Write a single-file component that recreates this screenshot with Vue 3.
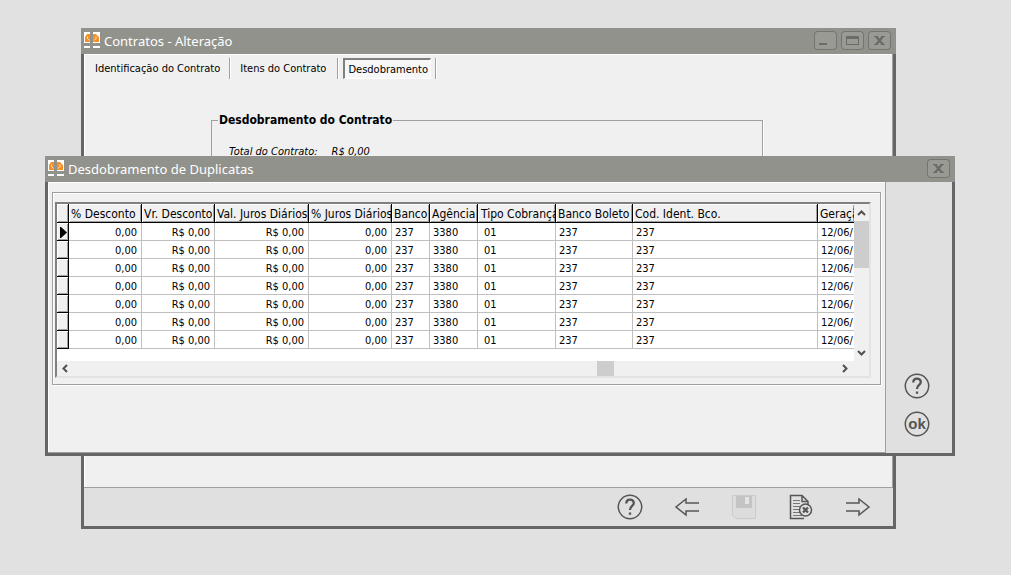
<script setup>
const columns = [
  { title: '% Desconto', value: '0,00', size: 'w73', right: true },
  { title: 'Vr. Desconto', value: 'R$ 0,00', size: 'w73', right: true },
  { title: 'Val. Juros Diários', value: 'R$ 0,00', size: 'w94', right: true },
  { title: '% Juros Diários', value: '0,00', size: 'w83', right: true },
  { title: 'Banco', value: '237', size: 'w38' },
  { title: 'Agência', value: '3380', size: 'w48' },
  { title: 'Tipo Cobrança', value: '01', size: 'w78', indent: true },
  { title: 'Banco Boleto', value: '237', size: 'w77' },
  { title: 'Cod. Ident. Bco.', value: '237', size: 'w185' },
  { title: 'Geração', value: '12/06/', size: 'w36' },
]
const rows = 7
</script>

<template>
  <main class="desktop">
    <section class="window contracts" aria-label="Contratos - Alteração">
      <header class="titlebar">
        <svg class="logo" width="16" height="16" viewBox="0 0 16 16" aria-hidden="true">
          <path fill="#fff" d="M0 0h6v11H0zM9 0h7v11H9zM0 14h6v2H0zM9 14h7v2H9z" />
          <path fill="#f79127" d="M1 10V5l2-3h3v8zM9 2h3l3 3v5H9z" />
          <path fill="none" stroke="#fde3c6" d="M3.500 4.500v2l2 2M12 4.500v2l-2 2" />
        </svg>
        <h1>Contratos - Alteração</h1>
        <div class="controls">
          <button type="button" aria-label="Minimizar"><svg width="23" height="19"><path d="M5 12h8v2H5z" /></svg></button>
          <button type="button" aria-label="Maximizar"><svg width="23" height="19"><path fill-rule="evenodd" d="M5 5h13v9H5zM6 8v5h11V8z" /></svg></button>
          <button type="button" aria-label="Fechar"><svg width="23" height="19"><path d="M6 5h4v1l1.500 1.500L13 6V5h4v1h-1l-3 3.500 3 3.500h1v1h-4v-1l-1.500-1.500L10 13v1H6v-1h1l3-3.500L7 6H6z" /></svg></button>
        </div>
      </header>
      <div class="page">
        <nav class="tabs">
          <button type="button">Identificação do Contrato</button>
          <button type="button">Itens do Contrato</button>
          <button type="button" class="active"><span>Desdobramento</span></button>
        </nav>
        <fieldset class="summary">
          <legend>Desdobramento do Contrato</legend>
          <p><span>Total do Contrato:</span><span>R$ 0,00</span></p>
        </fieldset>
      </div>
      <footer class="toolbar">
        <button type="button" aria-label="Ajuda">
          <svg class="icon" width="28" height="28" viewBox="0 0 28 28"><circle cx="14" cy="14" r="11.700" /><path class="thick" d="M10.300 10.500c0-5 7.500-5 7.500-.5 0 3-3.800 3-3.800 7" /><path class="thick" d="M14 19.500v2.300" /></svg>
        </button>
        <button type="button" aria-label="Anterior">
          <svg class="icon" width="28" height="28" viewBox="0 0 28 28"><path d="M26 10H13V6L3 14l10 8v-4h13" /></svg>
        </button>
        <button type="button" aria-label="Salvar" disabled>
          <svg width="28" height="28" viewBox="0 0 28 28"><path fill="#dcdcdc" stroke="#cacaca" d="M2.500 2.500h23v23h-20l-3-3z" /><path fill="#c4c4c4" d="M6 3h16v12H6z" /><path fill="#e4e4e4" d="M15 4h4v7h-4z" /></svg>
        </button>
        <button type="button" aria-label="Cancelar">
          <svg class="icon" width="28" height="28" viewBox="0 0 28 28"><path d="M17 25.500H3.500v-23H15l6 6V12M15 2.500v6h6" /><path class="thin" d="M6 7.500h7M6 10.500h7M6 13.500h12M6 16.500h9M6 19.500h8M6 22.500h9" /><circle class="disc" cx="18.500" cy="17" r="6" /><path class="thick" d="M16 14.500l5 5M21 14.500l-5 5" /></svg>
        </button>
        <button type="button" aria-label="Próximo">
          <svg class="icon" width="28" height="28" viewBox="0 0 28 28"><path d="M2 10h13V6l10 8-10 8v-4H2" /></svg>
        </button>
      </footer>
    </section>

    <section class="window duplicates" role="dialog" aria-label="Desdobramento de Duplicatas">
      <header class="titlebar">
        <svg class="logo" width="16" height="16" viewBox="0 0 16 16" aria-hidden="true">
          <path fill="#fff" d="M0 0h6v11H0zM9 0h7v11H9zM0 14h6v2H0zM9 14h7v2H9z" />
          <path fill="#f79127" d="M1 10V5l2-3h3v8zM9 2h3l3 3v5H9z" />
          <path fill="none" stroke="#fde3c6" d="M3.500 4.500v2l2 2M12 4.500v2l-2 2" />
        </svg>
        <h2>Desdobramento de Duplicatas</h2>
        <div class="controls">
          <button type="button" aria-label="Fechar"><svg width="23" height="19"><path d="M6 5h4v1l1.500 1.500L13 6V5h4v1h-1l-3 3.500 3 3.500h1v1h-4v-1l-1.500-1.500L10 13v1H6v-1h1l3-3.500L7 6H6z" /></svg></button>
        </div>
      </header>
      <div class="split">
        <div class="panel">
          <div class="frame">
            <div class="grid">
              <div class="body">
                <div class="viewport">
                  <table>
                    <thead>
                      <tr>
                        <th class="marker"></th>
                        <th v-for="c in columns" :key="c.title" :class="[c.size, { indent: c.indent }]">{{ c.title }}</th>
                      </tr>
                    </thead>
                    <tbody>
                      <tr v-for="r in rows" :key="r">
                        <th class="marker"><svg v-if="r === 1" width="7" height="11"><path d="M0 0h1l6 5.500L1 11H0z" /></svg></th>
                        <td v-for="c in columns" :key="c.title" :class="{ right: c.right, indent: c.indent }">{{ c.value }}</td>
                      </tr>
                    </tbody>
                  </table>
                </div>
                <div class="vscroll">
                  <button type="button" aria-label="Rolar para cima"><svg width="9" height="6"><path d="M1 5l3.500-3.500L8 5" /></svg></button>
                  <div class="vthumb"></div>
                  <button type="button" aria-label="Rolar para baixo"><svg width="9" height="6"><path d="M1 1l3.500 3.500L8 1" /></svg></button>
                </div>
              </div>
              <div class="hscroll">
                <button type="button" aria-label="Rolar para a esquerda"><svg width="6" height="9"><path d="M5 1L1.500 4.500 5 8" /></svg></button>
                <div class="track"><div class="hthumb"></div></div>
                <button type="button" aria-label="Rolar para a direita"><svg width="6" height="9"><path d="M1 1l3.500 3.500L1 8" /></svg></button>
              </div>
            </div>
          </div>
        </div>
        <aside class="actions">
          <button type="button" aria-label="Ajuda">
            <svg class="icon" width="28" height="28" viewBox="0 0 28 28"><circle cx="14" cy="14" r="11.700" /><path class="thick" d="M10.300 10.500c0-5 7.500-5 7.500-.5 0 3-3.800 3-3.800 7" /><path class="thick" d="M14 19.500v2.300" /></svg>
          </button>
          <button type="button" class="ok">
            <svg class="icon" width="28" height="28" viewBox="0 0 28 28" aria-hidden="true"><circle cx="14" cy="14" r="11.700" /></svg>
            <span>ok</span>
          </button>
        </aside>
      </div>
    </section>
  </main>
</template>

<style>
body {
  background: #e1e1e1;
}
</style>

<style scoped>
* {
  box-sizing: border-box;
}
.desktop {
  position: relative;
  min-height: 100vh;
  overflow: hidden;
  background: #e1e1e1;
  color: #000;
  font: 11px/14px "DejaVu Sans Condensed", "DejaVu Sans", sans-serif;
}
button {
  padding: 0;
  border: 0;
  background: none;
  color: inherit;
  font: inherit;
}
svg {
  display: block;
}
.window {
  position: absolute;
  display: flex;
  flex-direction: column;
  border: solid #666;
  border-width: 0 3px 3px;
  background: #f0f0f0;
}
.contracts {
  top: 28px;
  left: 81px;
  right: 115px;
  height: 501px;
}
.duplicates {
  top: 156px;
  left: 45px;
  right: 56px;
  height: 300px;
}
.titlebar {
  display: flex;
  align-items: center;
  flex: none;
  height: 26px;
  margin: 0 -3px;
  padding: 0 5px 0 3px;
  background: #91928c;
}
.logo {
  margin-bottom: 2px;
}
h1,
h2 {
  flex: 1;
  margin: 0 0 0 4px;
  color: #fff;
  font: 13px/18px "Noto Sans", "Open Sans", sans-serif;
}
.controls {
  display: flex;
  gap: 4px;
  margin-bottom: 1px;
}
.controls button {
  width: 23px;
  height: 19px;
  border-radius: 4px;
  background: #999a94;
  box-shadow: inset 0 0 0 1px #747570;
}
.controls path {
  fill: #6b6c68;
}
.page {
  flex: 1;
  border: solid #a0a0a0;
  border-width: 0 1px 1px 0;
  box-shadow: inset 1px 1px #fff;
}
.tabs {
  display: flex;
  padding-top: 4px;
}
.tabs button {
  height: 21px;
  padding: 0 11px 0 10px;
  border-right: 1px solid #a0a0a0;
  box-shadow: 1px 0 #fff;
}
.tabs button:first-child {
  padding: 0 9px 0 11px;
}
.tabs .active {
  padding: 0 4px 0 5px;
}
.active span {
  display: block;
  padding: 3px 2px 1px 3px;
  border: 1px solid #fff;
  border-top: 2px solid #808080;
  border-left: 2px solid #808080;
  background: #f7f7f7;
}
.summary {
  height: 100px;
  margin: 33px 129px 0 127px;
  padding: 0 17px;
  border: 1px solid #a0a0a0;
  box-shadow: 1px 0 #fff;
}
legend {
  margin-left: -11px;
  padding: 0 1px;
  font-size: 12px;
  line-height: 16px;
  font-weight: bold;
}
.summary p {
  display: flex;
  gap: 14px;
  margin: 17px 0 0;
  font-style: italic;
}
.toolbar {
  display: flex;
  flex: none;
  justify-content: flex-end;
  align-items: center;
  gap: 29px;
  height: 38px;
  padding-right: 21px;
  background: #e0e0e0;
}
.icon {
  fill: none;
  stroke: #555;
  stroke-width: 1.500;
}
.icon .thick {
  stroke-width: 2.300;
}
.icon .thin {
  stroke-width: 1;
  stroke: #777;
}
.icon .disc {
  fill: #e0e0e0;
}
.split {
  display: flex;
  flex: 1;
}
.panel {
  flex: 1;
  min-width: 0;
  padding: 10px 4px;
  border: solid #a0a0a0;
  border-width: 0 1px 1px 0;
  box-shadow: inset 1px 1px #fff;
}
.frame {
  padding: 9px 9px 6px 2px;
  border: 1px solid #a0a0a0;
  box-shadow: 1px 1px #fff, inset 1px 1px #fff;
}
.grid {
  border: 2px solid #808080;
  border-right-color: #e3e3e3;
  border-bottom-color: #e3e3e3;
  background: #fff;
}
.body {
  display: flex;
  height: 157px;
}
.viewport {
  flex: 1;
  min-width: 0;
  overflow: hidden;
}
table {
  width: 100%;
  border-collapse: separate;
  border-spacing: 0;
  table-layout: fixed;
}
th,
td {
  overflow: hidden;
  height: 18px;
  padding: 2px 3px 0;
  border: solid #c0c0c0;
  border-width: 0 1px 1px 0;
  text-align: left;
  text-overflow: clip;
  white-space: nowrap;
  font-weight: normal;
}
thead th {
  height: 19px;
  padding: 2px 0 0 2px;
  border-color: #000;
  background: #f0f0f0;
  box-shadow: inset 1px 1px #fff, inset -1px -1px #a0a0a0;
  font-size: 12px;
}
th.marker {
  width: 12px;
  padding: 1px 3px 0;
  border-color: #000;
  background: #f0f0f0;
  box-shadow: inset 1px 1px #fff, inset -1px -1px #a0a0a0;
}
td.right {
  padding-right: 4px;
  text-align: right;
}
thead .indent {
  padding-left: 3px;
}
td.indent {
  padding-left: 6px;
}
th:last-child,
td:last-child {
  border-right: 0;
}
.w36 { width: 36px; }
.w38 { width: 38px; }
.w48 { width: 48px; }
.w73 { width: 73px; }
.w77 { width: 77px; }
.w78 { width: 78px; }
.w83 { width: 83px; }
.w94 { width: 94px; }
.w185 { width: 185px; }
.vscroll {
  display: flex;
  flex-direction: column;
  width: 15px;
  background: #f0f0f0;
}
.vscroll button,
.hscroll button {
  display: grid;
  place-items: center;
  flex: none;
  width: 15px;
  height: 17px;
}
.vscroll path,
.hscroll path {
  fill: none;
  stroke: #505050;
  stroke-width: 2;
}
.vthumb {
  height: 47px;
  margin-bottom: auto;
  background: #cdcdcd;
}
.hscroll {
  display: flex;
  align-items: center;
  height: 15px;
  padding-right: 17px;
  background: #f0f0f0;
}
.track {
  flex: 1;
  padding-left: 66%;
}
.hthumb {
  width: 17px;
  height: 15px;
  background: #cdcdcd;
}
.actions {
  display: flex;
  flex-direction: column;
  align-items: center;
  justify-content: flex-end;
  gap: 10px;
  width: 66px;
  padding: 0 4px 15px 0;
  background: #e0e0e0;
}
.ok {
  display: grid;
  place-items: center;
  color: #555;
  font: bold 15px/18px "Liberation Sans", sans-serif;
}
.ok > * {
  grid-area: 1 / 1;
}
</style>
